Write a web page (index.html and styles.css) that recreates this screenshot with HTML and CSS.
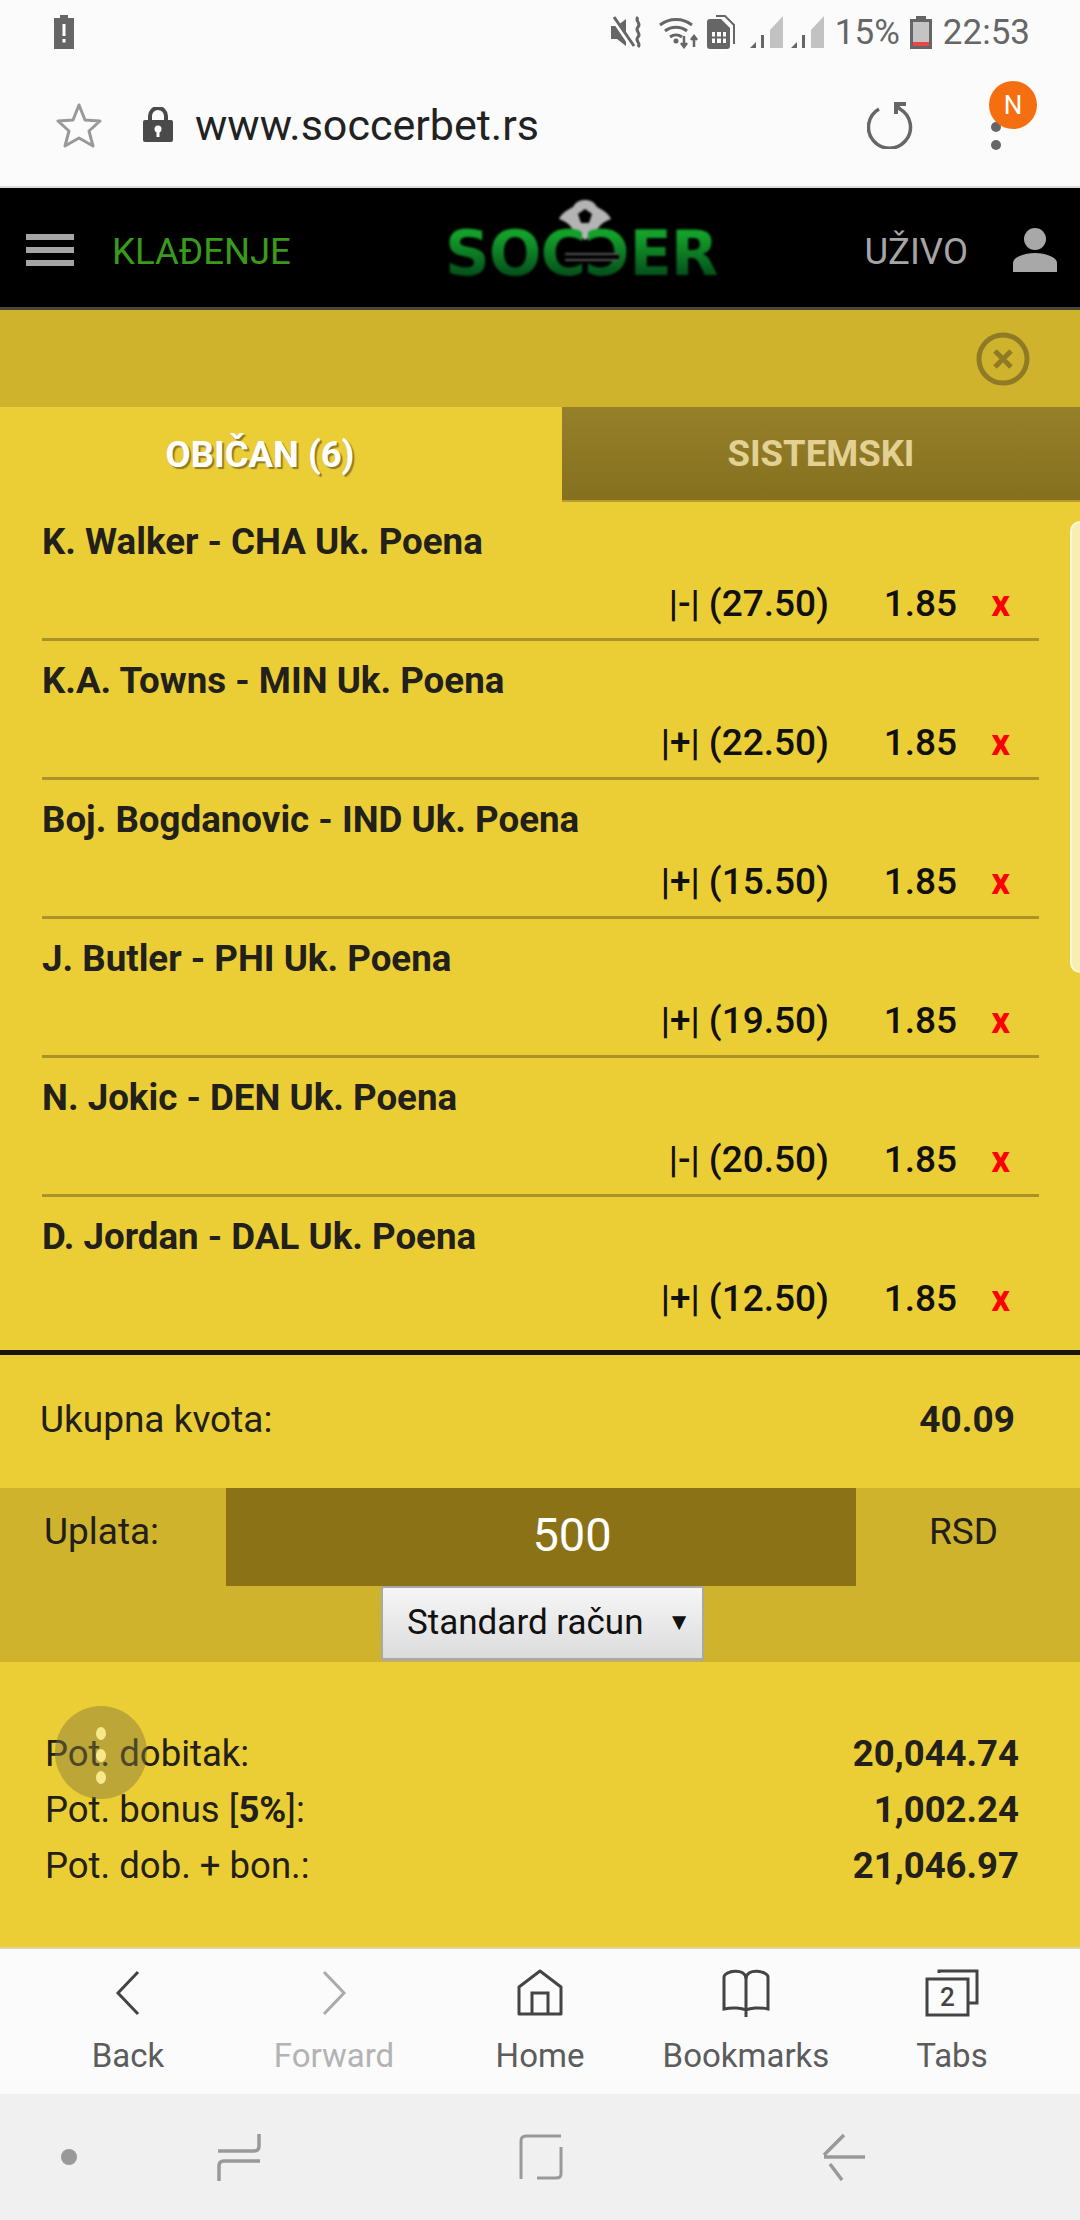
FILE: index.html
```html
<!DOCTYPE html>
<html lang="en">
<head>
    <meta charset="UTF-8">
    <title>Soccerbet</title>
    <link rel="stylesheet" href="styles.css">
</head>
<body>
<div class="screen">

    <!-- phone status bar -->
    <div class="status">
        <svg class="ic-alert" width="24" height="36" viewBox="0 0 24 36">
            <path d="M8 1h8v3h6v31H2V4h6z" fill="#666"/>
            <rect x="10.500" y="10" width="3" height="12" fill="#fff"/>
            <rect x="10.500" y="25" width="3" height="3.500" fill="#fff"/>
        </svg>
        <div class="status-right">
            <svg width="34" height="34" viewBox="0 0 34 34">
                <path d="M1 11h6l9-7v27l-9-7H1z" fill="#666"/>
                <path d="M3 3l19 28" stroke="#fff" stroke-width="5"/>
                <path d="M4 2l20 29" stroke="#666" stroke-width="3"/>
                <path d="M28 2c-4 4 4 6 0 10s4 6 0 10 4 6 0 10" fill="none" stroke="#666" stroke-width="3"/>
            </svg>
            <svg class="ic-wifi" width="42" height="34" viewBox="0 0 42 34">
                <path d="M2 10a26 26 0 0 1 32 0M7 16a18 18 0 0 1 22 0M12 22a10 10 0 0 1 12 0" fill="none" stroke="#666" stroke-width="3"/>
                <circle cx="18" cy="26" r="2.500" fill="#666"/>
                <path d="M26 21v10m-3-3l3 4 3-4M36 32V22m-3 3l3-4 3 4" fill="none" stroke="#666" stroke-width="2.500"/>
            </svg>
            <svg class="ic-sim" width="30" height="34" viewBox="0 0 30 34">
                <path d="M11 1h9l9 9v19" fill="none" stroke="#666" stroke-width="2"/>
                <path d="M2 7a3 3 0 0 1 3-3h11l9 9v18a3 3 0 0 1-3 3H5a3 3 0 0 1-3-3z" fill="#666"/>
                <rect x="7" y="17" width="14" height="11" fill="#fff"/>
                <path d="M11 17v11M17 17v11M7 22.500h14" stroke="#666" stroke-width="2"/>
            </svg>
            <svg class="ic-signal" width="36" height="34" viewBox="0 0 36 34">
                <path d="M0 33l6-6v6z" fill="#666"/>
                <rect x="11" y="20" width="3" height="13" fill="#666"/>
                <path d="M20 15L33 1v32H20z" fill="#c2c2c2"/>
            </svg>
            <svg class="ic-signal-2" width="36" height="34" viewBox="0 0 36 34">
                <path d="M0 33l6-6v6z" fill="#666"/>
                <rect x="11" y="20" width="3" height="13" fill="#666"/>
                <path d="M20 15L33 1v32H20z" fill="#c2c2c2"/>
            </svg>
            <span class="status-text pct">15%</span>
            <svg width="22" height="34" viewBox="0 0 22 34">
                <path d="M6 1h10v3h6v30H0V4h6z" fill="#666"/>
                <rect x="3" y="7" width="16" height="24" fill="#c4c4c4"/>
                <rect x="3" y="27" width="16" height="4" fill="#e8444a"/>
            </svg>
            <span class="status-text time">22:53</span>
        </div>
    </div>

    <!-- browser address bar -->
    <div class="address">
        <svg class="ic-star" width="46" height="46" viewBox="0 0 46 46">
            <path d="M23 3l6 15 15 1-11 10 4 15-14-8-14 8 4-15L2 19l15-1z" fill="none" stroke="#999" stroke-width="3" stroke-linejoin="round"/>
        </svg>
        <svg class="ic-lock" width="30" height="36" viewBox="0 0 30 36">
            <path d="M7 14V9a8 8 0 0 1 16 0v5" fill="none" stroke="#4a4a4a" stroke-width="4"/>
            <rect x="0" y="13" width="30" height="22" rx="2" fill="#4a4a4a"/>
            <circle cx="15" cy="22" r="3.500" fill="#fff"/>
            <rect x="13.500" y="23" width="3" height="7" fill="#fff"/>
        </svg>
        <span class="url">www.soccerbet.rs</span>
        <svg class="ic-reload" width="48" height="48" viewBox="0 0 48 48">
            <path d="M12 8a21 21 0 1 0 21 0l-5-5" fill="none" stroke="#666" stroke-width="3.500"/>
            <path d="M27 1h12v4h-8v8h-4z" fill="#666"/>
        </svg>
        <div class="menu-dots"><i></i><i></i></div>
        <div class="badge">N</div>
    </div>

    <!-- site header -->
    <div class="site-head">
        <div class="burger"><i></i><i></i><i></i></div>
        <span class="head-bet">KLAĐENJE</span>
        <div class="logo">
            <svg class="logo-ball" width="56" height="42" viewBox="0 0 56 42">
                <path d="M28 1c6 0 9 2 12 7 6 3 12 7 14 12-5 2-9 4-12 8-3 4-8 9-14 13-6-4-11-9-14-13-3-4-7-6-12-8 2-5 8-9 14-12 3-5 6-7 12-7z" fill="#b4b4b4"/>
                <path d="M21 15l7-5 7 5-3 9h-8z" fill="#000"/>
            </svg>
            <div class="logo-text"><span>S</span><span>O</span><span>C</span><span class="logo-flip">C</span><span>E</span><span>R</span></div>
            <i class="logo-link"></i>
        </div>
        <span class="head-live">UŽIVO</span>
        <svg class="ic-user" width="46" height="44" viewBox="0 0 46 44">
            <ellipse cx="23" cy="11" rx="11" ry="11" fill="#a8a8a8"/>
            <path d="M1 44v-9c0-6 12-10 22-10s22 4 22 10v9z" fill="#a8a8a8"/>
        </svg>
    </div>

    <div class="slip">
        <div class="slip-top">
            <svg width="54" height="54" viewBox="0 0 54 54">
                <circle cx="27" cy="27" r="24" fill="none" stroke="#8f7a25" stroke-width="5"/>
                <path d="M19 19l16 16M35 19L19 35" stroke="#8f7a25" stroke-width="5"/>
            </svg>
        </div>

        <div class="tabs">
            <div class="tab tab-on">OBIČAN (6)</div>
            <div class="tab tab-off">SISTEMSKI</div>
        </div>

        <div class="bets">
            <div class="bet">
                <div class="bet-name">K. Walker - CHA Uk. Poena</div>
                <div class="bet-line"><span class="pick">|-| (27.50)</span><span class="odd">1.85</span><span class="del">x</span></div>
            </div>
            <div class="bet">
                <div class="bet-name">K.A. Towns - MIN Uk. Poena</div>
                <div class="bet-line"><span class="pick">|+| (22.50)</span><span class="odd">1.85</span><span class="del">x</span></div>
            </div>
            <div class="bet">
                <div class="bet-name">Boj. Bogdanovic - IND Uk. Poena</div>
                <div class="bet-line"><span class="pick">|+| (15.50)</span><span class="odd">1.85</span><span class="del">x</span></div>
            </div>
            <div class="bet">
                <div class="bet-name">J. Butler - PHI Uk. Poena</div>
                <div class="bet-line"><span class="pick">|+| (19.50)</span><span class="odd">1.85</span><span class="del">x</span></div>
            </div>
            <div class="bet">
                <div class="bet-name">N. Jokic - DEN Uk. Poena</div>
                <div class="bet-line"><span class="pick">|-| (20.50)</span><span class="odd">1.85</span><span class="del">x</span></div>
            </div>
            <div class="bet">
                <div class="bet-name">D. Jordan - DAL Uk. Poena</div>
                <div class="bet-line"><span class="pick">|+| (12.50)</span><span class="odd">1.85</span><span class="del">x</span></div>
            </div>
        </div>

        <div class="total">
            <span>Ukupna kvota:</span>
            <b>40.09</b>
        </div>

        <div class="stake">
            <div class="stake-row">
                <span class="stake-label">Uplata:</span>
                <div class="stake-input">500</div>
                <span class="stake-cur">RSD</span>
            </div>
            <div class="account"><span>Standard račun</span><span class="account-arrow">▼</span></div>
        </div>

        <div class="wins">
            <div class="win"><span>Pot. dobitak:</span><b>20,044.74</b></div>
            <div class="win"><span>Pot. bonus [<b>5%</b>]:</span><b>1,002.24</b></div>
            <div class="win"><span>Pot. dob. + bon.:</span><b>21,046.97</b></div>
        </div>

        <div class="scroll-tab"></div>
        <div class="fab"><i></i><i></i><i></i></div>
    </div>

    <!-- browser toolbar -->
    <div class="toolbar">
        <div class="tool">
            <svg width="46" height="48" viewBox="0 0 46 48"><path d="M33 3L13 24l20 21" fill="none" stroke="#444" stroke-width="3"/></svg>
            <span>Back</span>
        </div>
        <div class="tool tool-off">
            <svg width="46" height="48" viewBox="0 0 46 48"><path d="M13 3l20 21-20 21" fill="none" stroke="#aaa" stroke-width="3"/></svg>
            <span>Forward</span>
        </div>
        <div class="tool">
            <svg width="46" height="48" viewBox="0 0 46 48">
                <path d="M2 45V18L23 2l21 16v27z" fill="none" stroke="#444" stroke-width="3" stroke-linejoin="round"/>
                <path d="M15 45V24h16v21" fill="none" stroke="#444" stroke-width="3"/>
            </svg>
            <span>Home</span>
        </div>
        <div class="tool">
            <svg width="50" height="48" viewBox="0 0 50 48">
                <path d="M25 41c-4-2-13-3-22-1V8C3 2 25-2 25 10zM25 41c4-2 13-3 22-1V8C47 2 25-2 25 10zM25 41v7" fill="none" stroke="#444" stroke-width="3"/>
            </svg>
            <span>Bookmarks</span>
        </div>
        <div class="tool tool-tabs">
            <svg width="54" height="48" viewBox="0 0 54 48">
                <path d="M14 4V2h38v32h-8" fill="none" stroke="#444" stroke-width="3"/>
                <rect x="2" y="10" width="41" height="36" fill="#fbfbfb" stroke="#444" stroke-width="3"/>
                <text x="22.500" y="37" class="tabs-num">2</text>
            </svg>
            <span>Tabs</span>
        </div>
    </div>

    <!-- android nav bar -->
    <div class="navbar">
        <i class="nav-dot"></i>
        <svg class="nav-item" width="44" height="48" viewBox="0 0 44 48"><path d="M1 18h36q5 0 5-5V1M43 28H7q-5 0-5 5v15" fill="none" stroke="#999" stroke-width="3.500"/></svg>
        <svg class="nav-item" width="44" height="46" viewBox="0 0 44 46"><path d="M42 2H7Q2 2 2 7v38M42 13v27q0 4-5 4H18" fill="none" stroke="#999" stroke-width="3"/></svg>
        <svg class="nav-item" width="44" height="48" viewBox="0 0 44 48"><path d="M22 2L2 22M43 24H2M8 31l12 16" fill="none" stroke="#999" stroke-width="3.500"/></svg>
    </div>

</div>
</body>
</html>
```

FILE: styles.css
```css
* {
    padding: 0;
    margin: 0;
    box-sizing: border-box;
}
body {
    width: 1080px;
    height: 2220px;
    overflow: hidden;
    font-family: Roboto, "Liberation Sans", sans-serif;
    background-color: #fbfbfb;
}
i {
    display: block;
}
.screen {
    display: flex;
    flex-direction: column;
    height: 2220px;
}

/* status bar */
.status {
    display: flex;
    justify-content: space-between;
    align-items: center;
    height: 64px;
    padding: 0 50px 0 52px;
    background-color: #fbfbfb;
}
.status-right {
    display: flex;
    align-items: center;
}
.ic-wifi {
    margin-left: 14px;
}
.ic-sim {
    margin-left: 5px;
}
.ic-signal {
    margin-left: 15px;
}
.ic-signal-2 {
    margin-left: 5px;
}
.status-text {
    font-size: 35px;
    color: #666;
}
.pct {
    margin: 0 10px 0 8px;
}
.time {
    margin-left: 11px;
}

/* address bar */
.address {
    position: relative;
    display: flex;
    align-items: center;
    height: 124px;
    padding: 0 0 0 56px;
    background-color: #fbfbfb;
    border-bottom: 2px solid #ddd;
}
.ic-lock {
    margin-left: 41px;
}
.url {
    margin-left: 22px;
    font-size: 43px;
    color: #222;
}
.ic-reload {
    margin-left: 328px;
}
.menu-dots {
    margin-left: 76px;
    margin-top: 30px;
}
.menu-dots i {
    width: 10px;
    height: 10px;
    margin-bottom: 8px;
    border-radius: 50%;
    background-color: #666;
}
.badge {
    position: absolute;
    left: 989px;
    top: 17px;
    width: 48px;
    height: 48px;
    border-radius: 50%;
    background-color: #f56f10;
    color: #fff;
    font-size: 26px;
    line-height: 48px;
    text-align: center;
}

/* site header */
.site-head {
    display: flex;
    align-items: center;
    height: 122px;
    padding: 4px 22px 0 26px;
    background-color: #000;
    border-bottom: 3px solid #4a4636;
}
.burger {
    width: 48px;
}
.burger i {
    height: 6px;
    margin-bottom: 7px;
    background-color: #a5a5a5;
}
.burger i:last-child {
    margin-bottom: 0;
}
.head-bet {
    margin: 3px 0 0 38px;
    width: 180px;
    font-size: 36.500px;
    color: #3a9a1c;
}
.logo {
    position: relative;
    margin-top: -24px;
    margin-left: 155px;
    width: 275px;
    height: 78px;
    filter: blur(1px);
}
.logo-text {
    position: absolute;
    left: -2px;
    bottom: -13px;
    font-family: "DejaVu Sans", sans-serif;
    font-weight: bold;
    font-size: 62px;
    letter-spacing: -1px;
    white-space: nowrap;
}
.logo-text span {
    display: inline-block;
    background: linear-gradient(#14a02a 25%, #03481a 85%);
    -webkit-background-clip: text;
    background-clip: text;
    color: transparent;
}
.logo-text .logo-flip {
    transform: scaleX(-1);
}
.logo-ball {
    position: absolute;
    left: 110px;
    top: 0;
}
.logo-link {
    position: absolute;
    left: 118px;
    top: 54px;
    width: 54px;
    height: 8px;
    background-color: #000;
    border-top: 2px solid #555;
    border-bottom: 2px solid #555;
}
.head-live {
    margin: 3px 0 0 auto;
    font-size: 36.500px;
    color: #a5a5a5;
}
.ic-user {
    margin-left: 44px;
}

/* bet slip */
.slip {
    position: relative;
    flex: 1;
    background-color: #ebcd35;
    color: #22201a;
}
.slip-top {
    display: flex;
    justify-content: flex-end;
    align-items: center;
    height: 97px;
    padding-right: 50px;
    background-color: #cfb32d;
}
.tabs {
    display: flex;
    height: 95px;
}
.tab {
    display: flex;
    justify-content: center;
    align-items: center;
    font-size: 36.500px;
    font-weight: bold;
}
.tab-on {
    width: 562px;
    padding-right: 42px;
    color: #fff;
    text-shadow: 2px 2px 1px #8f7a25;
}
.tab-off {
    flex: 1;
    color: #e2d193;
    background: linear-gradient(#96802a, #85701f);
    border-bottom: 2px solid #b89e2a;
}

.bets {
    padding-bottom: 14px;
    border-bottom: 5px solid #17150c;
}
.bet {
    height: 139px;
    margin: 0 41px 0 42px;
    border-bottom: 3px solid #ab9229;
}
.bet:last-child {
    border-bottom: none;
}
.bet-name {
    height: 77px;
    padding-top: 5px;
    font-size: 36.700px;
    font-weight: bold;
    line-height: 70px;
}
.bet-line {
    display: flex;
    justify-content: flex-end;
    align-items: center;
    height: 48px;
    font-size: 37px;
    font-weight: 500;
    color: #111;
}
.odd {
    width: 128px;
    text-align: right;
}
.del {
    width: 82px;
    padding-right: 29px;
    text-align: right;
    color: #f00;
    font-weight: bold;
}

.total {
    display: flex;
    justify-content: space-between;
    align-items: center;
    height: 128px;
    padding: 0 65px 0 40px;
    font-size: 37px;
}
.total b {
    font-weight: bold;
}

.stake {
    height: 174px;
    margin-top: 5px;
    background-color: #cfb32d;
}
.stake-row {
    display: flex;
    height: 98px;
}
.stake-label {
    width: 226px;
    padding: 22px 0 0 44px;
    font-size: 37px;
}
.stake-input {
    width: 630px;
    padding-left: 62px;
    background-color: #8c7216;
    color: #fff;
    font-size: 47px;
    line-height: 94px;
    text-align: center;
}
.stake-cur {
    flex: 1;
    padding: 22px 0 0 73px;
    font-size: 37px;
}
.account {
    display: flex;
    justify-content: space-between;
    align-items: center;
    width: 323px;
    height: 75px;
    margin-left: 381px;
    padding: 0 11px 2px 24px;
    font-size: 35px;
    color: #111;
    background: linear-gradient(#f6f6f6, #dcdcdc);
    border: 2px solid #a8a8a8;
    border-bottom-width: 3px;
    border-radius: 3px;
}
.account-arrow {
    font-size: 24px;
}

.wins {
    padding: 63px 61px 0 45px;
}
.win {
    display: flex;
    justify-content: space-between;
    align-items: center;
    height: 56px;
    font-size: 36.500px;
}
.win b {
    font-weight: bold;
}

.scroll-tab {
    position: absolute;
    right: 0;
    top: 211px;
    width: 10px;
    height: 452px;
    background-color: #f8eeb4;
    border: 2px solid #fdf8dc;
    border-right: none;
    border-radius: 10px 0 0 10px;
}
.fab {
    position: absolute;
    left: 55px;
    top: 1396px;
    width: 92px;
    height: 93px;
    padding-top: 21px;
    border-radius: 50%;
    background-color: rgba(130, 120, 60, 0.45);
}
.fab i {
    width: 10px;
    height: 13px;
    margin: 0 auto 9px;
    border-radius: 50%;
    background-color: #f8e88c;
}

/* browser toolbar */
.toolbar {
    display: flex;
    height: 147px;
    padding: 20px 25px 0;
    background-color: #fbfbfb;
    border-top: 2px solid #dcd6a8;
}
.tool {
    flex: 1;
    display: flex;
    flex-direction: column;
    align-items: center;
    font-size: 33px;
    color: #5c5c5c;
}
.tool span {
    margin-top: 19px;
}
.tool-off {
    color: #b3b3b3;
}
.tabs-num {
    font-family: Roboto, sans-serif;
    font-size: 26px;
    font-weight: 500;
    fill: #444;
    text-anchor: middle;
}

/* android nav bar */
.navbar {
    display: grid;
    grid-template-columns: 138px 202px 402px 204px;
    align-items: center;
    justify-items: center;
    height: 126px;
    background-color: #f0f0f0;
}
.nav-dot {
    width: 16px;
    height: 16px;
    border-radius: 50%;
    background-color: #999;
}
```
